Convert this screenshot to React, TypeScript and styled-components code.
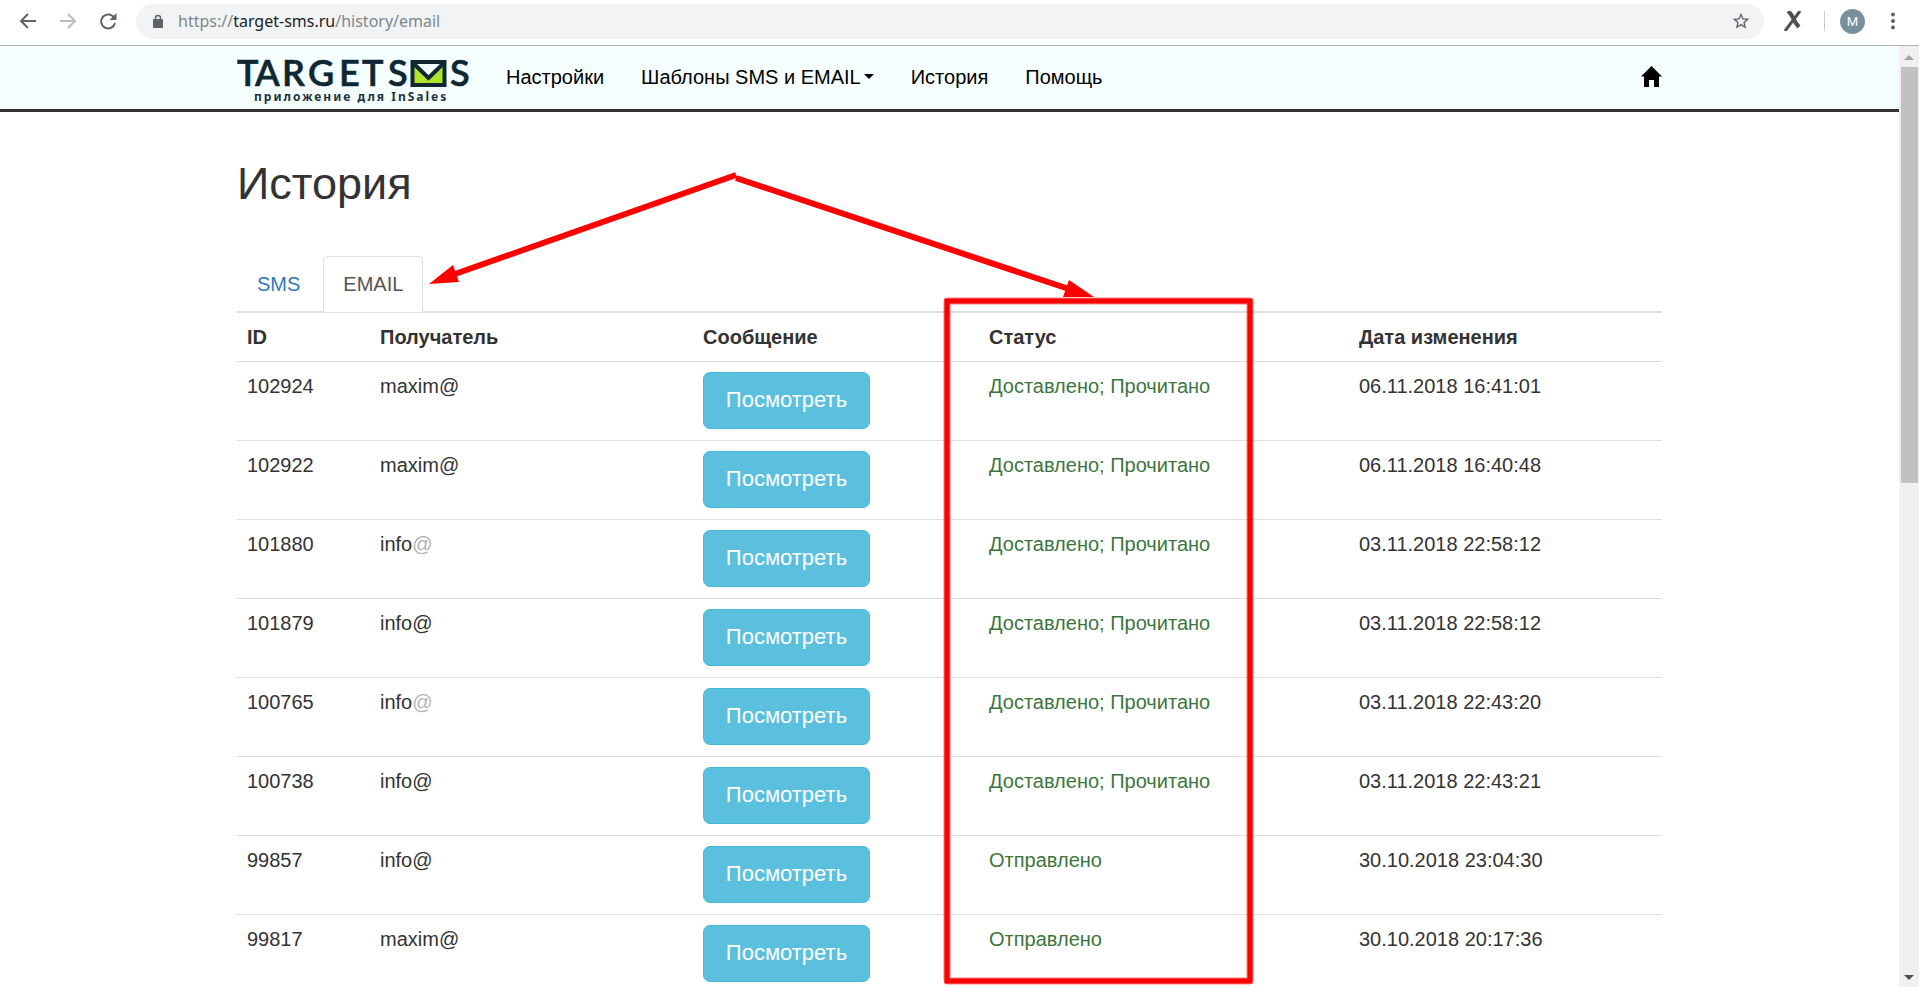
import React from "react";
import styled, { createGlobalStyle } from "styled-components";

const GlobalStyle = createGlobalStyle`
  *, *::before, *::after { box-sizing: border-box; }
  body {
    margin: 0;
    background: #fff;
    color: #333;
    font-family: "Liberation Sans", Arial, sans-serif;
    font-size: 20px;
    line-height: 28px;
  }
`;

const Window = styled.div`
  display: flex;
  flex-direction: column;
  height: 100vh;
  overflow: hidden;
`;

const Toolbar = styled.div`
  display: flex;
  align-items: center;
  flex: none;
  height: 46px;
  padding: 0 16px 3px;
  border-bottom: 1px solid #b2b4b8;
`;

const ToolButton = styled.button<{ $muted?: boolean }>`
  display: flex;
  align-items: center;
  justify-content: center;
  width: 24px;
  height: 24px;
  margin-right: 16px;
  padding: 0;
  border: 0;
  background: none;
  color: ${(p) => (p.$muted ? "#babcbe" : "#5f6368")};
`;

const AddressBar = styled.div`
  display: flex;
  align-items: center;
  flex: 1;
  height: 35px;
  margin-right: 20px;
  padding: 0 13px 0 16px;
  border-radius: 18px;
  background: #f1f3f4;
  color: #5f6368;
`;

const Url = styled.span`
  flex: 1;
  margin-left: 14px;
  color: #80868b;
  font-family: "Noto Sans", sans-serif;
  font-size: 16px;
  line-height: 24px;
  b { font-weight: 400; color: #202124; }
`;

const Extensions = styled.div`
  display: flex;
  align-items: center;
  color: #5f6368;
`;

const Separator = styled.span`
  width: 1px;
  height: 20px;
  margin: 0 15px 0 22px;
  background: #c8cacc;
`;

const Avatar = styled.button`
  width: 25px;
  height: 25px;
  margin-right: 18px;
  padding: 0;
  border: 0;
  border-radius: 50%;
  background: #78909c;
  color: #fff;
  font-family: Roboto, sans-serif;
  font-size: 13px;
  line-height: 25px;
`;

const MenuButton = styled.button`
  display: flex;
  padding: 0;
  border: 0;
  background: none;
  color: inherit;
`;

const Frame = styled.div`
  display: flex;
  flex: 1;
  min-height: 0;
`;

const Page = styled.div`
  flex: 1;
  min-width: 0;
  overflow-y: auto;
  scrollbar-width: none;
`;

const Container = styled.div`
  max-width: 1425px;
  margin: 0 auto;
`;

const Header = styled.header`
  border-bottom: 3px solid #333;
  background: #f5ffff;
`;

const HeaderRow = styled(Container)`
  display: flex;
  align-items: center;
  height: 63px;
  padding-bottom: 2px;
`;

const Brand = styled.a`
  display: flex;
  margin-right: 18px;
  text-decoration: none;
`;

const Nav = styled.nav`
  display: flex;
  flex: 1;
`;

const NavLink = styled.a`
  display: flex;
  align-items: center;
  padding: 0 19px 0 18px;
  color: #000;
  text-decoration: none;
`;

const Caret = styled.span`
  margin-left: 3px;
  border: 5px solid transparent;
  border-top-color: #000;
  border-bottom-width: 0;
`;

const HomeLink = styled.a`
  display: flex;
  color: #000;
`;

const Content = styled(Container)`
  position: relative;
`;

const Title = styled.h1`
  margin: 0;
  padding: 47px 0;
  font-size: 45px;
  font-weight: 400;
  line-height: 50px;
`;

const Tabs = styled.div`
  display: flex;
  gap: 3px;
  border-bottom: 1px solid #ddd;
`;

const Tab = styled.a<{ $active?: boolean }>`
  margin-bottom: -1px;
  padding: 13px 19px 14px;
  border: 1px solid ${(p) => (p.$active ? "#ddd" : "transparent")};
  border-bottom: 0;
  border-radius: 5px 5px 0 0;
  background: ${(p) => (p.$active ? "#fff" : "transparent")};
  color: ${(p) => (p.$active ? "#555" : "#337ab7")};
  text-decoration: none;
`;

const Table = styled.table`
  width: 100%;
  table-layout: fixed;
  border-collapse: separate;
  border-spacing: 0;
`;

const Col = styled.col<{ $width?: number }>`
  width: ${(p) => (p.$width ? `${p.$width}px` : "auto")};
`;

const Th = styled.th`
  padding: 10px;
  border-top: 1px solid #ddd;
  text-align: left;
`;

const Td = styled.td<{ $success?: boolean }>`
  padding: 10px 10px 11px;
  border-top: 1px solid #ddd;
  color: ${(p) => (p.$success ? "#3c763d" : "inherit")};
  vertical-align: top;
`;

const Faded = styled.span`
  color: #b4b4b4;
`;

const ViewButton = styled.button`
  display: block;
  width: 167px;
  height: 57px;
  padding: 0 0 2px;
  border: 1px solid #46b8da;
  border-radius: 7px;
  background: #5bc0de;
  color: #fff;
  font-family: inherit;
  font-size: 22px;
  line-height: 30px;
`;

const Marks = styled.svg`
  position: absolute;
  top: 0;
  left: 0;
  overflow: visible;
  pointer-events: none;
`;

const Scrollbar = styled.div`
  display: flex;
  flex-direction: column;
  align-items: center;
  justify-content: space-between;
  width: 20px;
  padding: 9px 0 7px;
  background: #f0f0f0;
`;

const Thumb = styled.div`
  flex: 0 0 45%;
  width: 17px;
  margin: 7px 0 auto;
  background: #c1c1c1;
`;

const ScrollArrow = styled.span<{ $down?: boolean }>`
  border: 5px solid transparent;
  ${(p) =>
    p.$down
      ? "border-bottom-width: 0; border-top-color: #505050;"
      : "border-top-width: 0; border-bottom-color: #a3a3a3;"}
`;

const messages = [
  { id: "102924", to: "maxim", status: "Доставлено; Прочитано", date: "06.11.2018 16:41:01" },
  { id: "102922", to: "maxim", status: "Доставлено; Прочитано", date: "06.11.2018 16:40:48" },
  { id: "101880", to: "info", faded: true, status: "Доставлено; Прочитано", date: "03.11.2018 22:58:12" },
  { id: "101879", to: "info", status: "Доставлено; Прочитано", date: "03.11.2018 22:58:12" },
  { id: "100765", to: "info", faded: true, status: "Доставлено; Прочитано", date: "03.11.2018 22:43:20" },
  { id: "100738", to: "info", status: "Доставлено; Прочитано", date: "03.11.2018 22:43:21" },
  { id: "99857", to: "info", status: "Отправлено", date: "30.10.2018 23:04:30" },
  { id: "99817", to: "maxim", status: "Отправлено", date: "30.10.2018 20:17:36" },
];

const Logo = () => (
  <svg width="233" height="61" viewBox="0 0 233 61" role="img" aria-label="TARGETSMS">
    <g fill="#0f2733" stroke="#0f2733" strokeWidth="0.600" fontFamily="Lato, sans-serif" fontSize="36" fontWeight="600">
      <text x="0 18 45 71 102 125 151" y="40">TARGETS</text>
      <text x="213" y="40">S</text>
    </g>
    <rect x="175" y="16" width="33" height="23" fill="#b0e629" />
    <path d="M175 16h33l-16.500 17z" fill="#f5ffff" />
    <rect x="175.500" y="16" width="32" height="23" fill="none" stroke="#0f2733" strokeWidth="4" />
    <path d="M175 16l16.500 16L208 16" fill="none" stroke="#0f2733" strokeWidth="4" />
    <text x="17" y="55" fill="#1c3340" fontFamily="'Noto Sans', sans-serif" fontSize="12" fontWeight="700" letterSpacing="2">
      приложение для InSales
    </text>
  </svg>
);

export default function App() {
  return (
    <>
      <GlobalStyle />
      <Window>
        <Toolbar>
          <ToolButton aria-label="Назад">
            <svg width="18" height="18" viewBox="0 0 18 18" fill="none" stroke="currentColor" strokeWidth="2">
              <path d="M17 9H3M9 2L2 9l7 7" />
            </svg>
          </ToolButton>
          <ToolButton aria-label="Вперёд" $muted>
            <svg width="18" height="18" viewBox="0 0 18 18" fill="none" stroke="currentColor" strokeWidth="2">
              <path d="M1 9h14M9 2l7 7-7 7" />
            </svg>
          </ToolButton>
          <ToolButton aria-label="Обновить">
            <svg width="18" height="18" viewBox="0 0 18 18" fill="none">
              <path d="M15 5.500A7 7 0 1 0 16 11" stroke="currentColor" strokeWidth="2" />
              <path d="M17.500 1v7h-7z" fill="currentColor" />
            </svg>
          </ToolButton>
          <AddressBar>
            <svg width="12" height="15" viewBox="0 0 12 15" fill="none">
              <rect x="1" y="5" width="10" height="9" rx="1" fill="currentColor" />
              <path d="M3.500 6V4a2.500 2.500 0 0 1 5 0v2" stroke="currentColor" strokeWidth="1.500" />
            </svg>
            <Url>
              https://<b>target-sms.ru</b>/history/email
            </Url>
            <MenuButton aria-label="Добавить в закладки">
              <svg width="20" height="20" viewBox="0 0 24 24" fill="currentColor">
                <path d="M22 9.240l-7.190-.620L12 2 9.190 8.630 2 9.240l5.460 4.730L5.820 21 12 17.270 18.180 21l-1.630-7.030L22 9.240zM12 15.400l-3.760 2.270 1-4.280-3.320-2.880 4.380-.380L12 6.100l1.710 4.040 4.380.380-3.320 2.880 1 4.280L12 15.400z" />
              </svg>
            </MenuButton>
          </AddressBar>
          <Extensions>
            <svg width="18" height="20" viewBox="0 0 18 20" fill="none" stroke="#505050">
              <path d="M4 0c3 2 4 5 6 9s3 5 5 7" strokeWidth="4" />
              <path d="M16 0L1 20" strokeWidth="3" />
            </svg>
            <Separator />
            <Avatar>M</Avatar>
            <MenuButton aria-label="Меню">
              <svg width="20" height="20" viewBox="0 0 20 20" fill="currentColor">
                <circle cx="10" cy="3.500" r="2" />
                <circle cx="10" cy="10" r="2" />
                <circle cx="10" cy="16.500" r="2" />
              </svg>
            </MenuButton>
          </Extensions>
        </Toolbar>
        <Frame>
          <Page>
            <Header>
              <HeaderRow>
                <Brand href="#">
                  <Logo />
                </Brand>
                <Nav>
                  <NavLink href="#">Настройки</NavLink>
                  <NavLink href="#">
                    Шаблоны SMS и EMAIL
                    <Caret />
                  </NavLink>
                  <NavLink href="#">История</NavLink>
                  <NavLink href="#">Помощь</NavLink>
                </Nav>
                <HomeLink href="#" aria-label="Главная">
                  <svg width="21" height="21" viewBox="0 0 21 21" fill="currentColor">
                    <path d="M10.500 0L21 10.500h-3V21h-5v-7H8v7H3V10.500H0z" />
                  </svg>
                </HomeLink>
              </HeaderRow>
            </Header>
            <Content as="main">
              <Title>История</Title>
              <Tabs>
                <Tab href="#">SMS</Tab>
                <Tab href="#" $active>
                  EMAIL
                </Tab>
              </Tabs>
              <Table>
                <colgroup>
                  <Col $width={133} />
                  <Col $width={323} />
                  <Col $width={286} />
                  <Col $width={370} />
                  <Col />
                </colgroup>
                <thead>
                  <tr>
                    <Th>ID</Th>
                    <Th>Получатель</Th>
                    <Th>Сообщение</Th>
                    <Th>Статус</Th>
                    <Th>Дата изменения</Th>
                  </tr>
                </thead>
                <tbody>
                  {messages.map((m) => (
                    <tr key={m.id}>
                      <Td>{m.id}</Td>
                      <Td>
                        {m.to}
                        {m.faded ? <Faded>@</Faded> : "@"}
                      </Td>
                      <Td>
                        <ViewButton>Посмотреть</ViewButton>
                      </Td>
                      <Td $success>{m.status}</Td>
                      <Td>{m.date}</Td>
                    </tr>
                  ))}
                </tbody>
              </Table>
              <Marks width="1425" height="880" viewBox="0 0 1425 880" fill="none" stroke="#f00" aria-hidden="true">
                <path d="M499 63L218 162M499 66L832 177" strokeWidth="6" />
                <path d="M192 172l24-19 6 17zM857 185l-25-17-6 17z" fill="#f00" stroke="none" />
                <rect x="710" y="189" width="303" height="680" rx="1" strokeWidth="7" strokeOpacity="0.5" />
                <rect x="710" y="189" width="303" height="680" strokeWidth="5" />
              </Marks>
            </Content>
          </Page>
          <Scrollbar>
            <ScrollArrow />
            <Thumb />
            <ScrollArrow $down />
          </Scrollbar>
        </Frame>
      </Window>
    </>
  );
}
